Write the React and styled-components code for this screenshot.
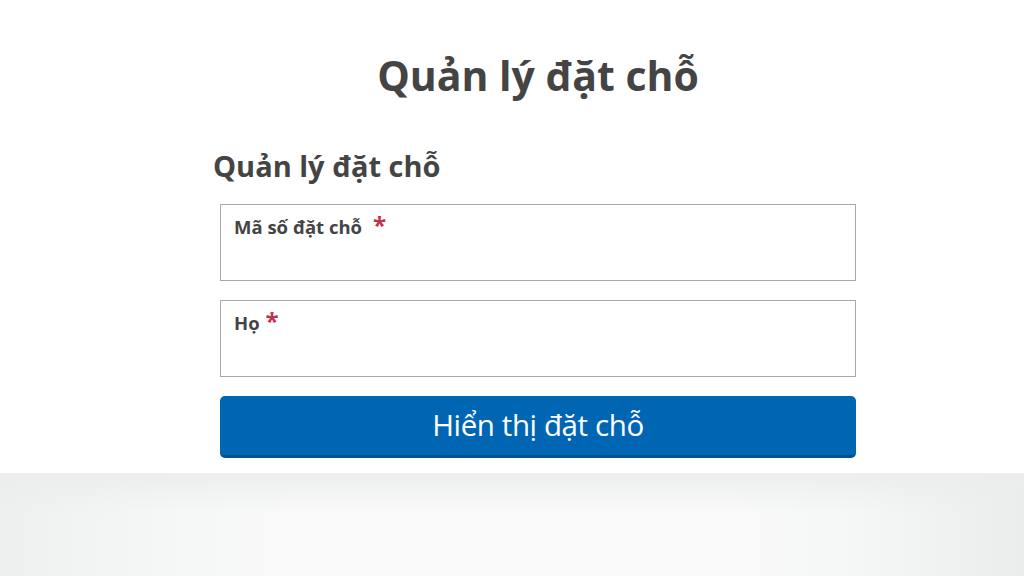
import React from "react";
import styled, { createGlobalStyle } from "styled-components";

const Global = createGlobalStyle`
  html, body { margin: 0; padding: 0; background: #ffffff; }
  body { font-family: "Open Sans", "Noto Sans", sans-serif; color: #444444; }
  * { box-sizing: border-box; }
`;

const Page = styled.div`
  width: 1024px;
  height: 576px;
  display: flex;
  flex-direction: column;
  overflow: hidden;
`;

const Top = styled.main`
  height: 473px;
  background: #ffffff;
  display: flex;
  flex-direction: column;
  align-items: center;
  padding-left: 52px;
`;

const Title = styled.h1`
  margin: 47px 0 0 0;
  font-size: 41px;
  line-height: 56px;
  font-weight: 700;
  color: #444444;
  letter-spacing: 0;
`;

const Column = styled.section`
  width: 650px;
  margin-top: 43px;
  display: flex;
  flex-direction: column;
`;

const SubTitle = styled.h2`
  margin: 0;
  font-size: 29px;
  line-height: 40px;
  font-weight: 700;
  color: #444444;
  letter-spacing: 0;
`;

const Form = styled.form`
  margin: 18px 7px 0 7px;
  display: flex;
  flex-direction: column;
  gap: 19px;
`;

const Field = styled.label`
  height: 77px;
  border: 1px solid #a9a9a9;
  background: #ffffff;
  padding: 8px 13px 4px 13px;
  display: flex;
  flex-direction: column;
`;

const LabelText = styled.span`
  font-size: 18.5px;
  line-height: 28px;
  font-weight: 700;
  color: #444444;
  display: flex;
  align-items: flex-start;
  gap: ${(p) => p.$gap}px;
`;

const Star = styled.span`
  color: #c4314b;
  font-size: 24px;
  line-height: 24px;
  font-weight: 700;
`;

const Input = styled.input`
  border: none;
  outline: none;
  background: transparent;
  font: inherit;
  font-size: 17px;
  height: 30px;
  padding: 0;
`;

const Button = styled.button`
  height: 62px;
  border: none;
  border-radius: 5px;
  background: #0066b3;
  border-bottom: 3px solid #00518f;
  color: #ffffff;
  font-family: "Open Sans", "Noto Sans", sans-serif;
  font-size: 29.5px;
  font-weight: 400;
  letter-spacing: -0.4px;
  cursor: pointer;
  padding: 0 0 2px 0;
`;

const Footer = styled.footer`
  flex: 1;
  background:
    linear-gradient(180deg, #eceeee 0px, rgba(248,249,249,0) 40px),
    linear-gradient(90deg, #eeefef 0%, #f6f7f7 18%, #fafafa 30%, #fafafa 70%, #f6f7f7 82%, #ebecec 100%);
`;

export default function App() {
  return (
    <>
      <Global />
      <Page>
        <Top>
          <Title>Quản lý đặt chỗ</Title>
          <Column>
            <SubTitle>Quản lý đặt chỗ</SubTitle>
            <Form onSubmit={(e) => e.preventDefault()}>
              <Field>
                <LabelText $gap={11}>
                  Mã số đặt chỗ <Star>*</Star>
                </LabelText>
                <Input type="text" />
              </Field>
              <Field>
                <LabelText $gap={6}>
                  Họ <Star>*</Star>
                </LabelText>
                <Input type="text" />
              </Field>
              <Button type="submit">Hiển thị đặt chỗ</Button>
            </Form>
          </Column>
        </Top>
        <Footer />
      </Page>
    </>
  );
}
